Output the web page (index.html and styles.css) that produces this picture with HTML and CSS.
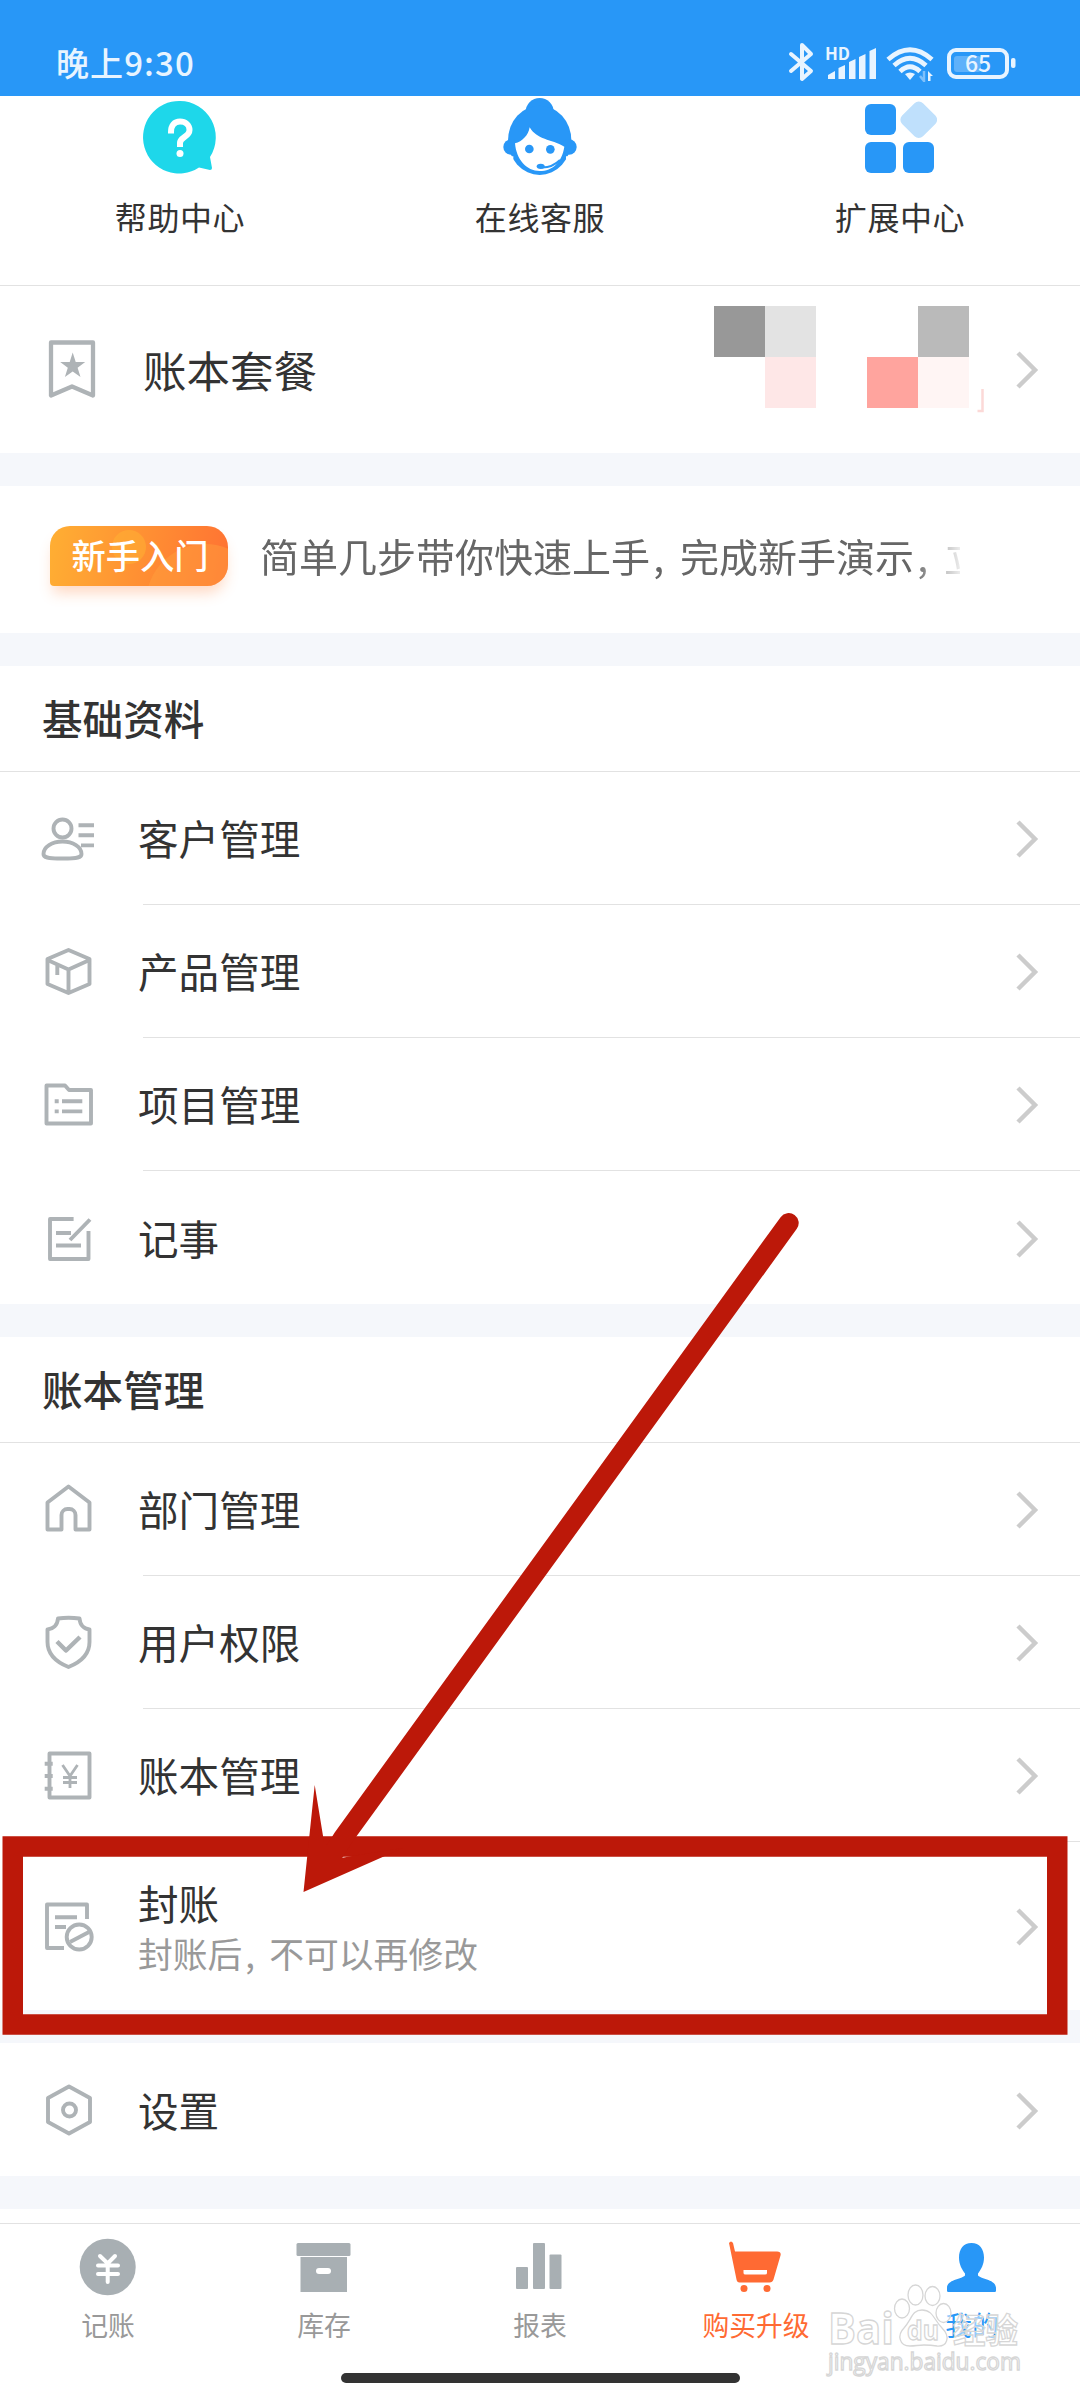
FILE: index.html
```html
<!DOCTYPE html>
<html lang="zh-CN">
<head>
  <meta charset="UTF-8">
  <title>我的</title>
  <link rel="stylesheet" href="styles.css">
</head>
<body>

  <!-- 状态栏 -->
  <header class="status">
    <span class="time">晚上9:30</span>
    <svg class="status-icons" width="232" height="42" viewBox="0 0 232 42" fill="none" stroke="#e8f4ff">
      <path d="M5 14L25 31L16 39V5L25 14L5 31" stroke-width="4" stroke-linejoin="round" stroke-linecap="round"/>
      <text x="39" y="20" class="hd">HD</text>
      <g fill="#e8f4ff" stroke="none">
        <path d="M42 39v-4l7-4v8zM52.500 39V28l6.500-3v14zM63 39V22l6.500-3v20zM73 39V17l6.500-3v25zM83.500 39V11l6.500-3v31z"/>
        <path d="M119 34q5-3 10 0l-5 6z"/>
        <path d="M142 41v-10l5 5h-2.500v5z"/>
      </g>
      <g stroke-width="4.800">
        <path d="M102 19.500Q124 0 146 19.500M108 25.500Q124 11 140 25.500M114 31.500Q124 22 134 31.500"/>
      </g>
      <path d="M138 31v10l-4-5" stroke="#7ec0fb" stroke-width="2.500"/>
      <rect x="168" y="16" width="27" height="16" rx="3" fill="#5fb1fa" stroke="none"/>
      <rect x="163" y="10" width="58" height="27" rx="7" stroke-width="4"/>
      <rect x="225" y="18" width="4.500" height="10" rx="2" fill="#e8f4ff" stroke="none"/>
      <text x="179" y="32" class="level">65</text>
    </svg>
  </header>

  <!-- 快捷入口 -->
  <section class="shortcuts">
    <div class="shortcut">
      <svg width="74" height="80" viewBox="0 1 74 80">
        <path d="M37 6a36 36.300 0 0 1 30 56l2 11q0 2-2 2l-11-2.500A36 36.300 0 1 1 37 6z" fill="#1ed7ea"/>
        <path d="M28 38.500v-1.500c0-7 3.500-10.500 9-10.500s9.500 3.500 9.500 8.500c0 7-9.500 7-9.500 13v4" fill="none" stroke="#fff" stroke-width="6"/>
        <circle cx="37" cy="58.500" r="3.500" fill="#fff"/>
      </svg>
      <span>帮助中心</span>
    </div>
    <div class="shortcut">
      <svg width="74" height="80" viewBox="41 15 222 240" fill="#2897f7">
        <circle cx="151" cy="63" r="42"/>
        <ellipse cx="151" cy="148" rx="95" ry="104"/>
        <path d="M30 196h42v70h-42zM230 196h42v70h-42z" fill="#fff"/>
        <circle cx="65" cy="168" r="23"/>
        <circle cx="239" cy="168" r="23"/>
        <path d="M77 157c22-5 40-24 44-48c22 38 64 35 104 58c-7 46-35 73-74 73s-70-34-74-83z" fill="#fff"/>
        <circle cx="120" cy="174" r="13"/>
        <circle cx="183" cy="175" r="13"/>
        <ellipse cx="154" cy="226" rx="12" ry="8"/>
        <path d="M154 229q34 2 58-22" fill="none" stroke="#2897f7" stroke-width="6"/>
      </svg>
      <span>在线客服</span>
    </div>
    <div class="shortcut">
      <svg width="74" height="80" viewBox="0 1 74 80" fill="#2897f7">
        <rect x="2" y="9" width="31" height="31" rx="6"/>
        <rect x="2" y="47" width="31" height="31" rx="6"/>
        <rect x="40" y="47" width="31" height="31" rx="6"/>
        <rect x="41" y="10" width="29.500" height="29.500" rx="6" fill="#bfe0fc" transform="rotate(45 55.750 24.750)"/>
      </svg>
      <span>扩展中心</span>
    </div>
  </section>

  <section class="card plan">
    <svg class="plan-icon" width="60" height="60" viewBox="0 0 60 60">
      <path d="M9 2.500H51V55.500L30 46.500L9 55.500Z" fill="none" stroke="#aeb3b6" stroke-width="4.300" stroke-linejoin="round"/>
      <path d="M30.700 12.500l3 9.500h9.500l-7.600 5.800l2.900 9.200l-7.800-5.600l-7.800 5.600l2.900-9.200l-7.600-5.800h9.500z" fill="#aeb3b6"/>
    </svg>
    <span class="plan-name">账本套餐</span>
    <!-- 打码区域 -->
    <div class="mosaic">
      <i class="m1"></i><i class="m2"></i><i></i><i></i><i class="m3"></i>
      <i></i><i class="m4"></i><i></i><i class="m5"></i><i class="m6"></i>
    </div>
    <svg class="mosaic-edge" width="14" height="106" viewBox="0 0 14 106" fill="none"><path d="M8.500 72v22h-5" stroke="#fcd9d7" stroke-width="2.500"/></svg>
    <svg class="chevron" width="24" height="40" viewBox="0 0 24 40"><path d="M3 3L20 20L3 37"/></svg>
  </section>

  <section class="card guide">
    <span class="guide-tag">
      <svg class="tag-bg" width="178" height="60" viewBox="0 0 178 60">
        <circle cx="79" cy="21" r="17" fill="#ffb133" opacity=".55"/>
        <circle cx="155" cy="77" r="59" fill="#ffa23e" opacity=".45"/>
      </svg>
      <b>新手入门</b>
    </span>
    <span class="guide-text">简单几步带你快速上手<span class="comma">,</span>完成新手演示<span class="comma">,</span>立</span>
  </section>

  <section class="card">
    <h2>基础资料</h2>
    <div class="row">
      <svg class="icon" viewBox="0 0 60 60"><circle cx="23.500" cy="20.500" r="9"/><path d="M4.500 46C4.500 39 13 33.500 23.500 33.500S42.500 39 42.500 46C42.500 49.500 39 50.500 23.500 50.500S4.500 49.500 4.500 46zM39.500 17.200H55M39.500 27.300H55M42 37.400H55"/></svg>
      <span class="name">客户管理</span>
      <svg class="chevron" width="24" height="40" viewBox="0 0 24 40"><path d="M3 3L20 20L3 37"/></svg>
    </div>
    <div class="divider"></div>
    <div class="row">
      <svg class="icon" viewBox="0 0 60 60"><path d="M29.500 9L50.500 18V43L29.500 52L8.500 43V18zM8.500 19L29.500 28.500L50.500 19M29.500 28.500V52M18.300 23V34"/></svg>
      <span class="name">产品管理</span>
      <svg class="chevron" width="24" height="40" viewBox="0 0 24 40"><path d="M3 3L20 20L3 37"/></svg>
    </div>
    <div class="divider"></div>
    <div class="row">
      <svg class="icon" viewBox="0 0 60 60"><path d="M7.500 11.500H26L30 16H52V49.500H7.500zM15.700 27.300h4M23 27.300H43.300M15.700 37.400h4M23 37.400H43.300"/></svg>
      <span class="name">项目管理</span>
      <svg class="chevron" width="24" height="40" viewBox="0 0 24 40"><path d="M3 3L20 20L3 37"/></svg>
    </div>
    <div class="divider"></div>
    <div class="row last">
      <svg class="icon" viewBox="0 0 60 60"><path d="M34.600 11H11V51H49.500V23M51 11.500L31 32M17 25H32M17 37.500H42"/></svg>
      <span class="name">记事</span>
      <svg class="chevron" width="24" height="40" viewBox="0 0 24 40"><path d="M3 3L20 20L3 37"/></svg>
    </div>
  </section>

  <section class="card">
    <h2>账本管理</h2>
    <div class="row">
      <svg class="icon" viewBox="0 0 60 60"><path d="M29.500 7.500L50.500 23.500V50.500H36.500V36a6 6 0 0 0-6-6h-2a6 6 0 0 0-6 6V50.500H8.500V23.500z"/></svg>
      <span class="name">部门管理</span>
      <svg class="chevron" width="24" height="40" viewBox="0 0 24 40"><path d="M3 3L20 20L3 37"/></svg>
    </div>
    <div class="divider"></div>
    <div class="row">
      <svg class="icon" viewBox="0 0 60 60"><path d="M19 6.500Q29.500 5 40.500 6.500C41 13 45 17 50.500 17.500V30C50.500 43 42 50 29.500 55C17 50 8.500 43 8.500 30V17.500C14 17 18.500 13 19 6.500z"/><path d="M18 29.500L27 38.500L41 25" stroke-width="4.500"/></svg>
      <span class="name">用户权限</span>
      <svg class="chevron" width="24" height="40" viewBox="0 0 24 40"><path d="M3 3L20 20L3 37"/></svg>
    </div>
    <div class="divider"></div>
    <div class="row">
      <svg class="icon" viewBox="0 0 60 60"><path d="M10.500 8.500H50.500V52.500H10.500zM5.700 18.700h8M5.700 31h8M5.700 43.700h8"/><path d="M23.500 20L31 31L38.500 20M31 31V43M24 32.500H38M24 37.500H38" stroke-width="2.800"/></svg>
      <span class="name">账本管理</span>
      <svg class="chevron" width="24" height="40" viewBox="0 0 24 40"><path d="M3 3L20 20L3 37"/></svg>
    </div>
    <div class="divider"></div>
    <div class="row seal">
      <svg class="icon" viewBox="0 0 60 60"><path d="M48 23V8.500H8V52H25M16 21.300H38M16 31H27"/><circle cx="40.200" cy="41" r="12.500"/><path d="M31 46L50 36"/></svg>
      <div class="name">
        <div>封账</div>
        <div class="sub">封账后<span class="comma">,</span>不可以再修改</div>
      </div>
      <svg class="chevron" width="24" height="40" viewBox="0 0 24 40"><path d="M3 3L20 20L3 37"/></svg>
    </div>
  </section>

  <section class="card">
    <div class="row last">
      <svg class="icon" viewBox="0 0 60 60"><path d="M30 6.500L51 18V42L30 53.500L9 42V18z"/><circle cx="30.500" cy="30" r="6.500"/></svg>
      <span class="name">设置</span>
      <svg class="chevron" width="24" height="40" viewBox="0 0 24 40"><path d="M3 3L20 20L3 37"/></svg>
    </div>
  </section>

  <div class="peek"></div>

  <!-- 底部导航 -->
  <nav class="tabs">
    <div class="tab">
      <svg width="60" height="60" viewBox="0 0 60 60"><ellipse cx="29.700" cy="31" rx="28" ry="28.300" fill="#a8afb3"/><path d="M22 20L29.700 27.500L37 20M29.700 27.500V46M20 29.500H40M20 38H40" fill="none" stroke="#fff" stroke-width="4" stroke-linecap="round"/></svg>
      <span>记账</span>
    </div>
    <div class="tab">
      <svg width="60" height="60" viewBox="0 0 60 60" fill="#a8afb3"><rect x="2.500" y="7" width="54" height="13" rx="1.500"/><path d="M6.500 21H53V56H6.500z"/><rect x="22" y="32" width="15" height="6" rx="3" fill="#fff"/></svg>
      <span>库存</span>
    </div>
    <div class="tab">
      <svg width="60" height="60" viewBox="0 0 60 60" fill="#a8afb3"><rect x="6" y="31" width="12" height="22" rx="1"/><rect x="23" y="7" width="12" height="46" rx="1"/><rect x="39.500" y="18.500" width="12" height="34.500" rx="1"/></svg>
      <span>报表</span>
    </div>
    <div class="tab buy">
      <svg width="60" height="60" viewBox="0 0 60 60" fill="#ff6a33"><path d="M3 7q2-3 4 0l2 8.500h42q4.500 0 3.500 4l-7 24q-1 3-4 3h-30q-2.500 0-3-3z"/><path d="M17.500 34H41v3q0 1.500-2 1.500H19.500q-2 0-2-1.500z" fill="#fff"/><circle cx="18" cy="52.500" r="3.500"/><circle cx="41" cy="52.500" r="3.500"/></svg>
      <span>购买升级</span>
    </div>
    <div class="tab active">
      <svg width="60" height="60" viewBox="0 0 60 60" fill="#2897f7"><path d="M29.500 7c8 0 12.500 6 12.500 14.500c0 7-3 12-6 16v2c4 4 18 4 18 12.500v3q0 1-1.500 1h-46q-1.500 0-1.500-1v-3c0-8.500 14-8.500 18-12.500v-2c-3-4-6-9-6-16C17 13 21.500 7 29.500 7z"/></svg>
      <span>我的</span>
    </div>
  </nav>
  <div class="home-bar"></div>

  <!-- 标注:方框和箭头 -->
  <svg class="mark" width="1080" height="2400" viewBox="0 0 1080 2400">
    <rect x="12.750" y="1846.500" width="1044.500" height="178" fill="none" stroke="#bc1809" stroke-width="20.500"/>
    <path d="M788.700 1223L343 1838L328 1862" fill="none" stroke="#bc1809" stroke-width="20" stroke-linecap="round"/>
    <path d="M303.500 1892L314.700 1785L324 1842L341 1858L352 1856L403 1848z" fill="#bc1809"/>
  </svg>

  <!-- 水印 -->
  <svg class="watermark" width="210" height="110" viewBox="0 0 210 110">
    <g class="wm">
      <text x="6" y="70" font-size="43" textLength="66" lengthAdjust="spacingAndGlyphs" class="wm-bold">Bai</text>
      <ellipse cx="80" cy="34.500" rx="7.500" ry="9.500"/>
      <ellipse cx="93.500" cy="21" rx="7.500" ry="10"/>
      <ellipse cx="110.500" cy="22" rx="7.500" ry="9.500"/>
      <ellipse cx="121.500" cy="39" rx="7.500" ry="9.500"/>
      <path d="M100 36c11 0 12 10 20 18c9 9 5 19-5 18c-6-1-8-1-13-1s-9 1-14 1c-11 0-13-11-6-18c8-9 8-18 18-18z"/>
      <text x="85" y="66" font-size="27" textLength="32" lengthAdjust="spacingAndGlyphs" class="wm-bold">du</text>
      <text x="131" y="69" font-size="34" textLength="65" lengthAdjust="spacingAndGlyphs" class="wm-bold">经验</text>
      <text x="6" y="96" font-size="23" textLength="193" lengthAdjust="spacingAndGlyphs">jingyan.baidu.com</text>
    </g>
  </svg>

</body>
</html>
```
FILE: styles.css
```css
* {
  box-sizing: border-box;
}

body {
  margin: 0;
  width: 1080px;
  height: 2400px;
  position: relative;
  overflow: hidden;
  display: flex;
  flex-direction: column;
  background: #f5f7fb;
  color: #333;
  font-family: "Noto Sans CJK SC", "Noto Sans", sans-serif;
}

svg {
  display: block;
  flex: none;
}

/* 状态栏 */
.status {
  height: 96px;
  flex: none;
  background: #2897f7;
  display: flex;
  justify-content: space-between;
  align-items: flex-start;
  padding: 40px 62px 0 56px;
}

.time {
  font-size: 33px;
  line-height: 44px;
  font-weight: 500;
  color: #e8f4ff;
  letter-spacing: 1.1px;
}

.hd,
.level {
  fill: #e8f4ff;
  stroke: none;
  font-family: "Noto Sans CJK SC", sans-serif;
  font-weight: 500;
}

.hd {
  font-size: 17px;
  font-weight: 700;
}

.level {
  font-size: 23px;
}

/* 快捷入口 */
.shortcuts {
  height: 190px;
  flex: none;
  background: #fff;
  border-bottom: 1px solid #e2e2e2;
  display: grid;
  grid-template-columns: repeat(3, 1fr);
}

.shortcut {
  display: flex;
  flex-direction: column;
  align-items: center;
}

.shortcut span {
  margin-top: 20px;
  font-size: 32px;
  line-height: 40px;
  letter-spacing: 0.6px;
}

.card {
  background: #fff;
  margin-bottom: 33px;
  flex: none;
}

/* 账本套餐 */
.plan {
  height: 167px;
  display: flex;
  align-items: center;
  padding: 0 41px 0 42px;
}

.plan-name {
  flex: 1;
  margin-left: 41px;
  font-size: 43.5px;
}

.mosaic {
  display: grid;
  grid-template-columns: repeat(5, 51px);
  grid-template-rows: 51px 51px;
  margin-bottom: 25px;
}

.m1 { background: #989898; }
.m2 { background: #e3e3e3; }
.m3 { background: #bababa; }
.m4 { background: #fee7e7; }
.m5 { background: #ffa49e; }
.m6 { background: #fff5f4; }

.mosaic-edge {
  margin-left: 5px;
  margin-right: 27px;
}

.chevron path {
  fill: none;
  stroke: #ccc;
  stroke-width: 4.5;
}

/* 新手入门 */
.guide {
  height: 147px;
  display: flex;
  padding: 40px 0 0 50px;
}

.guide-tag {
  position: relative;
  width: 178px;
  height: 60px;
  border-radius: 20px 21px 21px 4px;
  background: linear-gradient(100deg, #ffaf33, #ff7233);
  box-shadow: 0 10px 14px -3px rgba(255, 130, 60, 0.3);
}

.tag-bg {
  position: absolute;
  left: 0;
  top: 0;
  border-radius: 20px 21px 21px 4px;
  overflow: hidden;
}

.guide-tag b {
  position: relative;
  display: block;
  padding-left: 2px;
  text-align: center;
  color: #fff;
  font-size: 34.3px;
  font-weight: 500;
  line-height: 57px;
}

.guide-text {
  margin-left: 32px;
  width: 700px;
  overflow: hidden;
  white-space: nowrap;
  font-size: 39px;
  line-height: 58px;
  height: 66px;
  color: #666;
  -webkit-mask-image: linear-gradient(to right, #000 93%, transparent 101%);
  mask-image: linear-gradient(to right, #000 93%, transparent 101%);
}

.comma {
  display: inline-block;
  width: 0.77em;
  padding-left: 0.08em;
}

/* 列表 */
h2 {
  margin: 0;
  height: 106px;
  padding-left: 42px;
  border-bottom: 1px solid #e2e2e2;
  font-size: 40.6px;
  font-weight: 500;
  line-height: 104px;
}

.row {
  height: 132px;
  display: flex;
  align-items: center;
  padding: 0 41px 0 39px;
}

.row.last {
  height: 133px;
}

.row.seal {
  height: 168px;
}

.icon {
  width: 60px;
  height: 60px;
  fill: none;
  stroke: #aeb3b6;
  stroke-width: 3.9;
  stroke-linejoin: round;
}

.row .chevron {
  margin-top: 2px;
}

.name {
  flex: 1;
  margin-left: 39px;
  font-size: 40.6px;
  line-height: 54px;
}

.seal .name {
  margin-top: 3px;
  line-height: 51px;
}

.sub {
  font-size: 34.8px;
  color: #999;
}

.divider {
  height: 1px;
  margin-left: 143px;
  background: #e2e2e2;
}

.peek {
  height: 14px;
  flex: none;
  background: #fff;
}

/* 底部导航 */
.tabs {
  height: 150px;
  flex: none;
  background: #fff;
  border-top: 1px solid #e2e2e2;
  display: grid;
  grid-template-columns: repeat(5, 1fr);
  padding-top: 12px;
}

.tab {
  display: flex;
  flex-direction: column;
  align-items: center;
  color: #999;
}

.tab span {
  margin-top: 11px;
  font-size: 26.8px;
  line-height: 36px;
}

.tab.buy {
  color: #ff6a33;
}

.tab.active {
  color: #2897f7;
}

.home-bar {
  flex: 1;
  background: #fff;
}

.home-bar::before {
  content: "";
  display: block;
  width: 399px;
  height: 10px;
  margin: 0 auto;
  border-radius: 5px;
  background: #333;
}

/* 浮在页面上的标注和水印 */
.mark {
  position: absolute;
  left: 0;
  top: 0;
}

.watermark {
  position: absolute;
  left: 822px;
  top: 2274px;
}

.wm {
  fill: rgba(255, 255, 255, 0.5);
  stroke: #d6d6d6;
  stroke-width: 1.3;
  font-family: "Open Sans", "Noto Sans CJK SC", sans-serif;
}

.wm-bold {
  font-weight: 700;
}
```
